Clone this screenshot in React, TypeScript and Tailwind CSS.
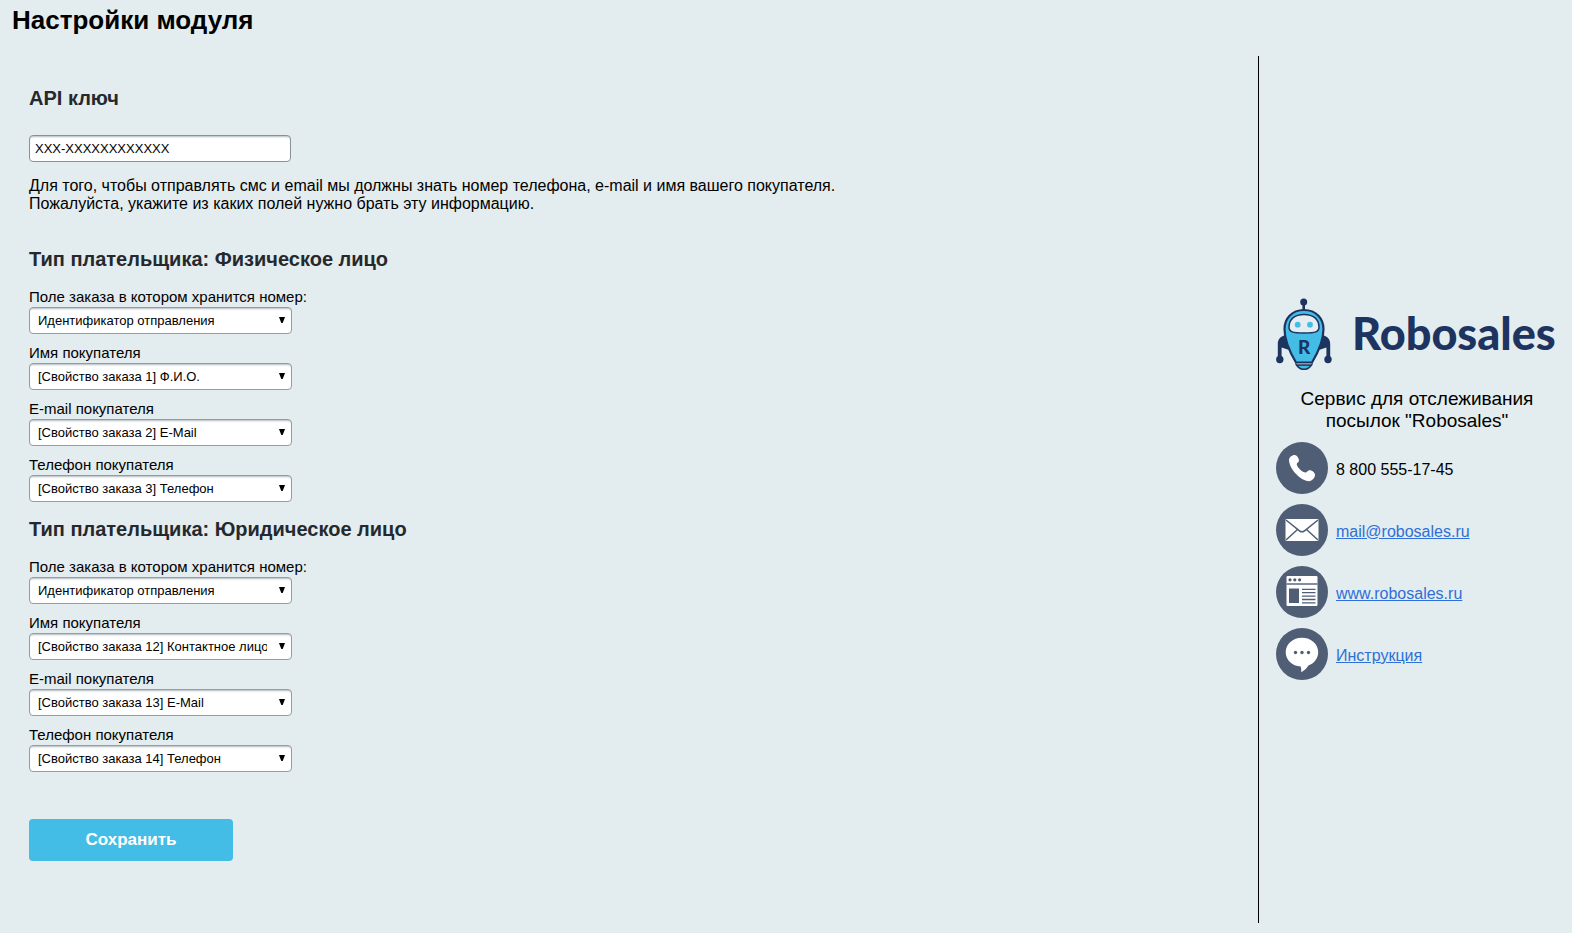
import { useState } from 'react';
import type { ReactNode } from 'react';

interface Field {
  id: string;
  label: string;
  value: string;
}

interface PayerType {
  title: string;
  fields: Field[];
}

const payerTypes: PayerType[] = [
  {
    title: 'Тип плательщика: Физическое лицо',
    fields: [
      { id: 'person-number', label: 'Поле заказа в котором хранится номер:', value: 'Идентификатор отправления' },
      { id: 'person-name', label: 'Имя покупателя', value: '[Свойство заказа 1] Ф.И.О.' },
      { id: 'person-email', label: 'E-mail покупателя', value: '[Свойство заказа 2] E-Mail' },
      { id: 'person-phone', label: 'Телефон покупателя', value: '[Свойство заказа 3] Телефон' },
    ],
  },
  {
    title: 'Тип плательщика: Юридическое лицо',
    fields: [
      { id: 'company-number', label: 'Поле заказа в котором хранится номер:', value: 'Идентификатор отправления' },
      { id: 'company-name', label: 'Имя покупателя', value: '[Свойство заказа 12] Контактное лицо' },
      { id: 'company-email', label: 'E-mail покупателя', value: '[Свойство заказа 13] E-Mail' },
      { id: 'company-phone', label: 'Телефон покупателя', value: '[Свойство заказа 14] Телефон' },
    ],
  },
];

function SelectField({ field }: { field: Field }) {
  return (
    <div className="flex flex-col items-start gap-px">
      <label htmlFor={field.id} className="text-[15px] leading-[18px]">{field.label}</label>
      <div className="relative">
        <select
          id={field.id}
          defaultValue={field.value}
          className="block h-[27px] w-[263px] appearance-none rounded border border-[#979a9e] bg-white pl-2 pr-6 text-[13px] text-black shadow-[inset_0_2px_2px_-1px_#b4bbbf]"
        >
          <option>{field.value}</option>
        </select>
        <svg className="pointer-events-none absolute right-[7px] top-[10px] size-[6px]" viewBox="0 0 6 6">
          <path d="M0 0h6L3.700 6H2.300z" fill="#000" />
        </svg>
      </div>
    </div>
  );
}

function RobotLogo() {
  return (
    <svg className="h-[72px] w-14 shrink-0" viewBox="0 0 56 72">
      {/* Antenna */}
      <path d="M27.700 5v8" stroke="#1d3461" strokeWidth="2.600" />
      <circle cx="27.700" cy="4" r="3.500" fill="#1d3461" />
      {/* Arms */}
      <path d="M9 37.500c-4.500.5-7.200 4-7.200 8.500v15h3.800V49.500L13 52zM47 37.500c4.500.5 7.200 4 7.200 8.500v15h-3.800V49.500L43 52z" fill="#1d3461" />
      <circle cx="3.800" cy="61.500" r="3.700" fill="#1d3461" />
      <circle cx="52" cy="61.500" r="3.700" fill="#1d3461" />
      {/* Body */}
      <path d="M28 12C15.500 12 8.500 21 8.500 31c0 11.500 5.500 23.500 11.500 33.500h16c6-10 11.500-22 11.500-33.500C47.500 21 40.500 12 28 12z" fill="#43bde6" stroke="#1d3461" strokeWidth="2.200" />
      <path d="M20.500 67h15c-2 3-4.500 4.300-7.500 4.300s-5.500-1.300-7.500-4.300z" fill="#43bde6" stroke="#1d3461" strokeWidth="1.500" />
      <path d="M19.500 64.500h17L35.500 67h-15z" fill="#8795a6" stroke="#1d3461" strokeWidth="1" />
      {/* Face */}
      <path d="M28 16.500c-9.500 0-15 5-15 12.500 0 5 3.500 6 15 6s15-1 15-6c0-7.500-5.500-12.500-15-12.500z" fill="#e6edf1" stroke="#1d3461" strokeWidth="1.500" />
      <circle cx="21.700" cy="26.700" r="2.900" fill="#43bde6" />
      <circle cx="34" cy="26.700" r="2.900" fill="#43bde6" />
      <text x="28.200" y="56" textAnchor="middle" fontFamily="Lato" fontWeight="900" fontSize="19" fill="#1d3461">R</text>
    </svg>
  );
}

function ContactRow({ icon, children }: { icon: ReactNode; children: ReactNode }) {
  return (
    <li className="flex items-center gap-2">
      <svg className="size-[52px] shrink-0" viewBox="0 0 52 52">
        <circle cx="26" cy="26" r="26" fill="#4f5d75" />
        {icon}
      </svg>
      <span className="pt-1 text-base">{children}</span>
    </li>
  );
}

const phoneIcon = (
  <path
    d="M13 18c0-2.500 3-5 5.500-5s4.500 3.500 4.500 5.500c0 1.800-2.300 2.300-2.300 3.700.5 3.300 5 7.500 8.500 8.300 1.700.2 2.200-2 4-2.200 2.300-.1 5.800 2 5.800 4.700 0 2.600-2.700 6-6 6.200C24 39 13 26 13 18z"
    fill="#fff"
  />
);

const mailIcon = (
  <>
    <path d="M10.500 15h31a1 1 0 0 1 1 1v20a1 1 0 0 1-1 1h-31a1 1 0 0 1-1-1V16a1 1 0 0 1 1-1z" fill="#fff" />
    <path d="M10 16l13.500 10.800c1.600 1.300 3.400 1.300 5 0L42 16M10 36l11.500-10.500M42 36L30.500 25.500" fill="none" stroke="#4f5d75" strokeWidth="1.500" />
  </>
);

const siteIcon = (
  <>
    <rect x="10.500" y="10" width="31" height="30" rx="1.200" fill="#fff" />
    <path d="M10.500 18h31" stroke="#4f5d75" strokeWidth="1.400" />
    <circle cx="14" cy="13.800" r="1.600" fill="#4f5d75" />
    <circle cx="18.800" cy="13.800" r="1.600" fill="#4f5d75" />
    <circle cx="23.600" cy="13.800" r="1.600" fill="#4f5d75" />
    <path d="M13 22.500h10V37H13z" fill="#4f5d75" />
    <path d="M26 23.300h13.500M26 26.700h13.500M26 30.100h13.500M26 33.500h13.500M26 36.900h13.500" stroke="#4f5d75" strokeWidth="1.300" />
  </>
);

const chatIcon = (
  <>
    <path d="M26 9.800c-9.200 0-16.300 6.300-16.300 14.400 0 7.600 6.300 13.700 15 14.300.6 1.800.7 3.700.5 5.700 3.300-1.600 5.500-3.900 7.200-6.700 5.900-2.200 9.800-7.200 9.800-13.300C42.200 16.100 35.200 9.800 26 9.800z" fill="#fff" />
    <circle cx="19.500" cy="24.500" r="1.700" fill="#4f5d75" />
    <circle cx="26" cy="24.500" r="1.700" fill="#4f5d75" />
    <circle cx="32.500" cy="24.500" r="1.700" fill="#4f5d75" />
  </>
);

const linkClass = 'text-[#2f6fd8] underline';

export default function App() {
  const [apiKey, setApiKey] = useState('XXX-XXXXXXXXXXXX');

  return (
    <div className="flex min-h-screen flex-col bg-[#e3ecee] pb-[10px] font-['Liberation_Sans',Arial,sans-serif] text-black">
      <h1 className="px-3 pt-1 text-[26px] font-bold leading-8">Настройки модуля</h1>

      <div className="mt-5 flex flex-1">
        <form className="flex-1 pb-12 pl-[29px] pt-[30px]" onSubmit={(e) => e.preventDefault()}>
          <h2 className="text-xl font-bold leading-6 text-[#25292d]">
            <label htmlFor="api-key">API ключ</label>
          </h2>
          <input
            id="api-key"
            type="text"
            value={apiKey}
            onChange={(e) => setApiKey(e.target.value)}
            className="mt-[25px] block h-[27px] w-[262px] rounded border border-[#87919c] bg-white px-[5px] text-[13px] shadow-[inset_0_2px_2px_-1px_#b4bbbf]"
          />
          <p className="mt-[15px] text-base leading-[18px]">
            Для того, чтобы отправлять смс и email мы должны знать номер телефона, e-mail и имя вашего покупателя.
            <br />
            Пожалуйста, укажите из каких полей нужно брать эту информацию.
          </p>

          <div className="mt-[34px] flex flex-col gap-[15px]">
            {payerTypes.map((payer) => (
              <section key={payer.title}>
                <h2 className="text-xl font-bold leading-6 text-[#25292d]">{payer.title}</h2>
                <div className="mt-[17px] flex flex-col gap-[10px]">
                  {payer.fields.map((field) => (
                    <SelectField key={field.id} field={field} />
                  ))}
                </div>
              </section>
            ))}
          </div>

          <button type="submit" className="mt-[47px] h-[42px] w-[204px] rounded bg-[#43bde6] text-[17px] font-bold text-white">
            Сохранить
          </button>
        </form>

        <aside className="flex w-[314px] shrink-0 flex-col justify-center border-l border-black pb-[2px] pl-[17px] pr-[14px]">
          <div className="flex items-center gap-5">
            <RobotLogo />
            <span className="font-['Lato',sans-serif] text-[45px] font-black leading-none text-[#1d3461]">Robosales</span>
          </div>
          <p className="mt-[18px] text-center text-[19px] leading-[22px]">
            Сервис для отслеживания
            <br />
            посылок "Robosales"
          </p>
          <ul className="mt-[10px] flex flex-col gap-[10px]">
            <ContactRow icon={phoneIcon}>8 800 555-17-45</ContactRow>
            <ContactRow icon={mailIcon}>
              <a href="mailto:mail@robosales.ru" className={linkClass}>mail@robosales.ru</a>
            </ContactRow>
            <ContactRow icon={siteIcon}>
              <a href="http://www.robosales.ru" className={linkClass}>www.robosales.ru</a>
            </ContactRow>
            <ContactRow icon={chatIcon}>
              <a href="#instruction" className={linkClass}>Инструкция</a>
            </ContactRow>
          </ul>
        </aside>
      </div>
    </div>
  );
}
